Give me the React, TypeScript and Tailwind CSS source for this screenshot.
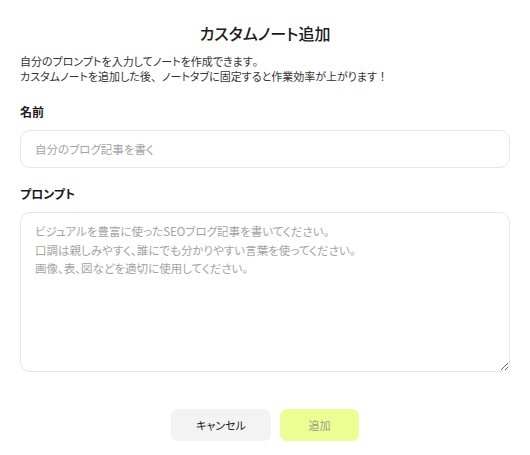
export default function App() {
  return (
    <div className="w-[530px] h-[455px] bg-white px-5 pt-[23px] text-[#1a1a1a] font-['Noto_Sans_CJK_JP',sans-serif] [font-feature-settings:'palt']">
      {/* Title */}
      <h2 className="text-center text-[16px] leading-[20px] font-medium">カスタムノート追加</h2>

      {/* Description */}
      <p className="mt-[11px] text-[11px] leading-[15px] text-[#333]">
        自分のプロンプトを入力してノートを作成できます<span className="[font-feature-settings:normal]">。</span>
        <br />
        カスタムノートを追加した後<span className="[font-feature-settings:normal]">、</span>ノートタブに固定すると作業効率が上がります<span className="[font-feature-settings:normal]">！</span>
      </p>

      {/* Name */}
      <label className="mt-5 block text-[12px] leading-[16px] font-bold">名前</label>
      <input
        type="text"
        placeholder="自分のブログ記事を書く"
        className="mt-[10px] block h-[38px] w-full rounded-[10px] border border-[#e6e6e6] px-[14px] text-[11.5px] outline-none placeholder:text-[#a3a3a3]"
      />

      {/* Prompt */}
      <label className="mt-[18px] block text-[12px] leading-[16px] font-bold">プロンプト</label>
      <textarea
        placeholder={
          "ビジュアルを豊富に使ったSEOブログ記事を書いてください。\n口調は親しみやすく、誰にでも分かりやすい言葉を使ってください。\n画像、表、図などを適切に使用してください。"
        }
        className="mt-[10px] block h-[160px] w-full rounded-[10px] border border-[#e6e6e6] px-[14px] py-[9px] text-[11.5px] leading-[18.5px] outline-none placeholder:text-[#a3a3a3]"
      />

      {/* Actions */}
      <div className="mt-[37px] flex justify-center gap-[9px]">
        <button className="h-[32px] w-[100px] rounded-[7px] bg-[#f3f3f3] text-[11px] text-[#1a1a1a]">
          キャンセル
        </button>
        <button className="h-[32px] w-[79px] rounded-[7px] bg-[#ebfd93] text-[11px] text-[#9a9f84]">
          追加
        </button>
      </div>
    </div>
  );
}
